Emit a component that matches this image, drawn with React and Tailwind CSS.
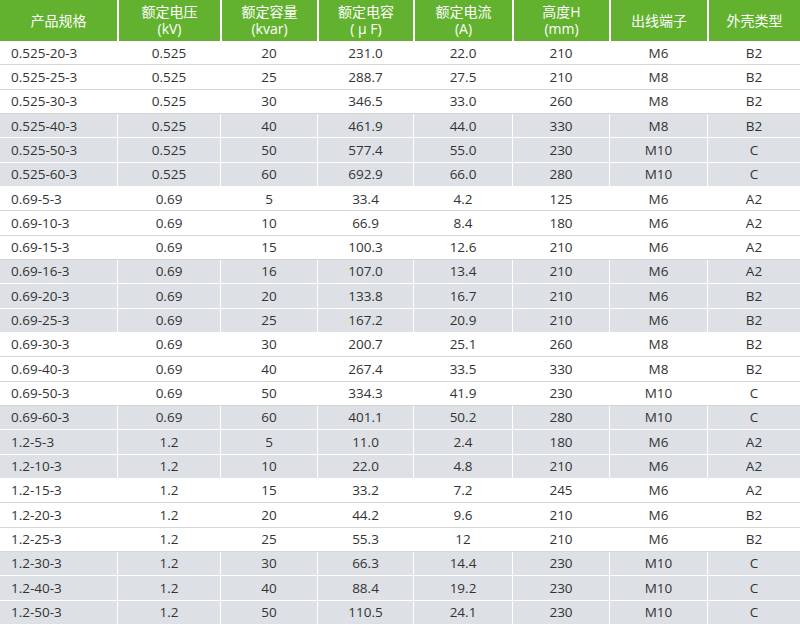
import React from "react";

const headers = [
  ["产品规格"],
  ["额定电压", "(kV)"],
  ["额定容量", "(kvar)"],
  ["额定电容", "( μ F)"],
  ["额定电流", "(A)"],
  ["高度H", "(mm)"],
  ["出线端子"],
  ["外壳类型"],
];

const rows = [
  ["0.525-20-3", "0.525", "20", "231.0", "22.0", "210", "M6", "B2"],
  ["0.525-25-3", "0.525", "25", "288.7", "27.5", "210", "M8", "B2"],
  ["0.525-30-3", "0.525", "30", "346.5", "33.0", "260", "M8", "B2"],
  ["0.525-40-3", "0.525", "40", "461.9", "44.0", "330", "M8", "B2"],
  ["0.525-50-3", "0.525", "50", "577.4", "55.0", "230", "M10", "C"],
  ["0.525-60-3", "0.525", "60", "692.9", "66.0", "280", "M10", "C"],
  ["0.69-5-3", "0.69", "5", "33.4", "4.2", "125", "M6", "A2"],
  ["0.69-10-3", "0.69", "10", "66.9", "8.4", "180", "M6", "A2"],
  ["0.69-15-3", "0.69", "15", "100.3", "12.6", "210", "M6", "A2"],
  ["0.69-16-3", "0.69", "16", "107.0", "13.4", "210", "M6", "A2"],
  ["0.69-20-3", "0.69", "20", "133.8", "16.7", "210", "M6", "B2"],
  ["0.69-25-3", "0.69", "25", "167.2", "20.9", "210", "M6", "B2"],
  ["0.69-30-3", "0.69", "30", "200.7", "25.1", "260", "M8", "B2"],
  ["0.69-40-3", "0.69", "40", "267.4", "33.5", "330", "M8", "B2"],
  ["0.69-50-3", "0.69", "50", "334.3", "41.9", "230", "M10", "C"],
  ["0.69-60-3", "0.69", "60", "401.1", "50.2", "280", "M10", "C"],
  ["1.2-5-3", "1.2", "5", "11.0", "2.4", "180", "M6", "A2"],
  ["1.2-10-3", "1.2", "10", "22.0", "4.8", "210", "M6", "A2"],
  ["1.2-15-3", "1.2", "15", "33.2", "7.2", "245", "M6", "A2"],
  ["1.2-20-3", "1.2", "20", "44.2", "9.6", "210", "M6", "B2"],
  ["1.2-25-3", "1.2", "25", "55.3", "12", "210", "M6", "B2"],
  ["1.2-30-3", "1.2", "30", "66.3", "14.4", "230", "M10", "C"],
  ["1.2-40-3", "1.2", "40", "88.4", "19.2", "230", "M10", "C"],
  ["1.2-50-3", "1.2", "50", "110.5", "24.1", "230", "M10", "C"],
];

const cols = "grid grid-cols-[117px_103px_97px_96px_99px_97px_98px_93px]";

export default function App() {
  return (
    <div
      className="w-[800px] h-[625px] overflow-hidden bg-white"
      style={{ fontFamily: '"Open Sans", "Noto Sans CJK SC", sans-serif' }}
    >
      <div className={`${cols} h-[41px] bg-[#62b22f] text-white text-[14px] leading-[17px]`}>
        {headers.map((h, i) => (
          <div
            key={i}
            className={`flex flex-col items-center justify-center pb-[1px] ${i > 0 ? "border-l-2 border-white" : ""}`}
          >
            {h.map((t, j) => (
              <span key={j}>{t}</span>
            ))}
          </div>
        ))}
      </div>
      {rows.map((r, ri) => {
        const grey = Math.floor(ri / 3) % 2 === 1;
        return (
          <div
            key={ri}
            className={`${cols} h-[24.33px] text-[13.5px] text-[#333333] border-b ${
              grey ? "bg-[#dde1e5] border-white" : "bg-white border-[#d6d6d6]"
            }`}
          >
            {r.map((c, ci) => (
              <div
                key={ci}
                className={`flex items-center ${
                  ci === 0 ? "pl-[11px]" : "justify-center border-l border-white"
                }`}
              >
                {c}
              </div>
            ))}
          </div>
        );
      })}
    </div>
  );
}
